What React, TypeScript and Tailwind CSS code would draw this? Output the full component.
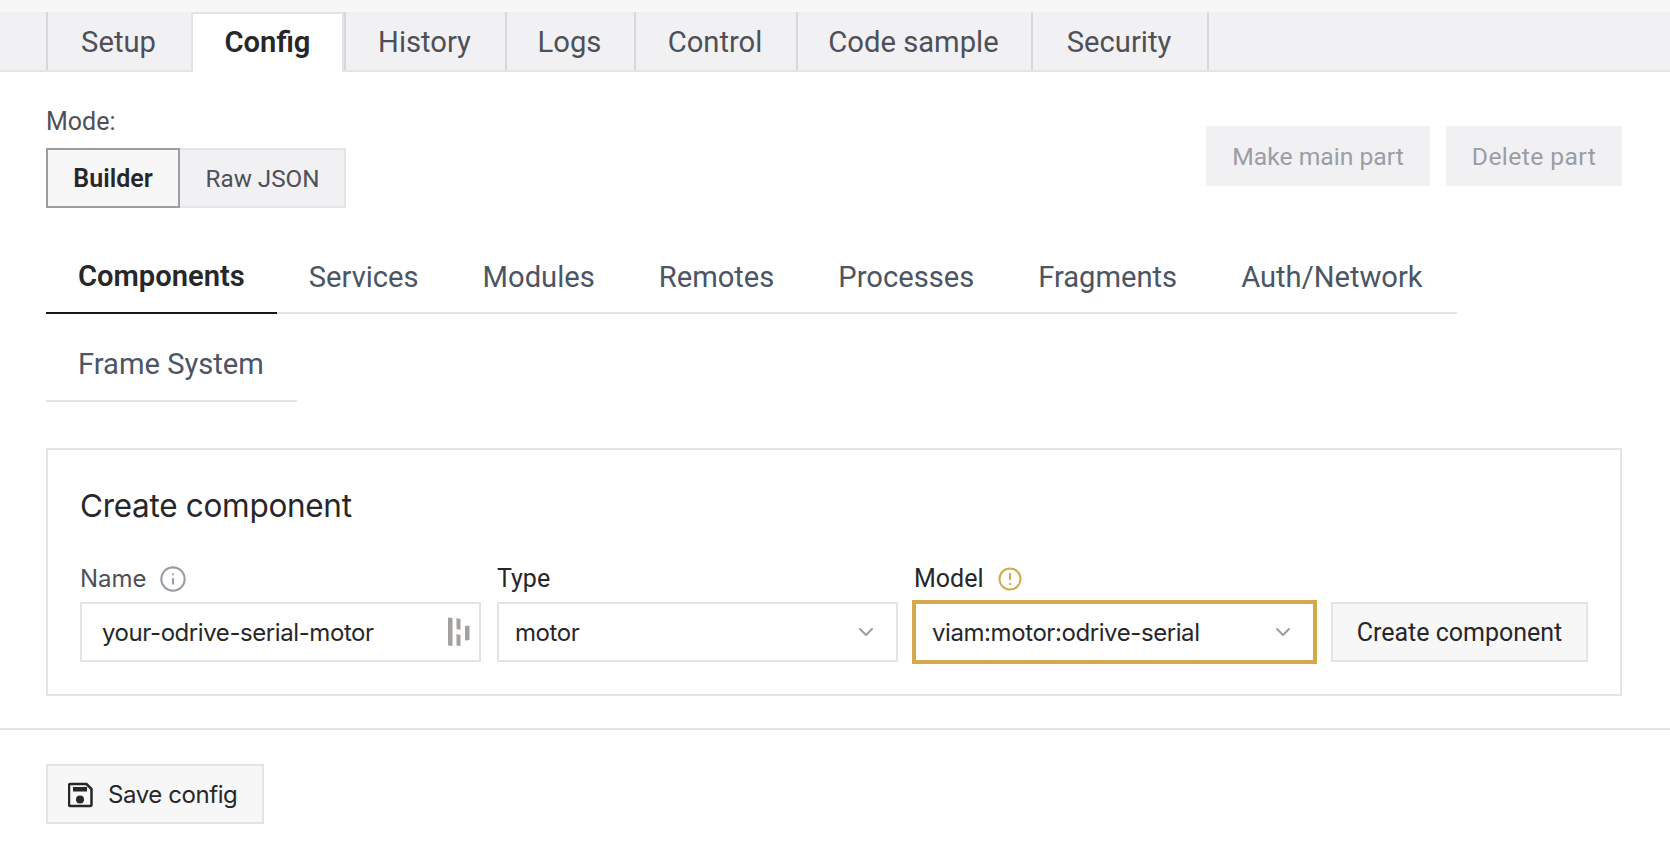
import { ChevronDown, Info } from "lucide-react";

const PLEX = "font-['Roboto','Liberation_Sans',sans-serif]";
const PUBLIC = "font-['Inter',sans-serif] text-[24px] tracking-[-0.42px]";

const topTabs = [
  { label: "Setup", width: "w-[145px]" },
  { label: "Config", width: "w-[153px]", active: true },
  { label: "History", width: "w-[161px]" },
  { label: "Logs", width: "w-[129px]" },
  { label: "Control", width: "w-[162px]" },
  { label: "Code sample", width: "w-[235px]" },
  { label: "Security", width: "w-[178px]", last: true },
];

const subTabs = [
  { label: "Components", active: true },
  { label: "Services" },
  { label: "Modules" },
  { label: "Remotes" },
  { label: "Processes" },
  { label: "Fragments" },
  { label: "Auth/Network" },
];

function SaveIcon() {
  return (
    <svg width="25" height="26" viewBox="0 0 25 26" fill="none" className="shrink-0">
      <path d="M2.5 2h16l5 5v15.500a1.500 1.500 0 0 1-1.500 1.500H2.500a1.500 1.500 0 0 1-1.500-1.500V3.500A1.500 1.500 0 0 1 2.500 2z" stroke="#27272a" strokeWidth="2.500" />
      <rect x="5" y="5" width="14" height="4.500" fill="#27272a" />
      <circle cx="12" cy="17.500" r="4" fill="#27272a" />
    </svg>
  );
}

function DashlaneIcon() {
  return (
    <svg width="22" height="30" viewBox="0 0 22 30" className="shrink-0">
      <path d="M0 0.500l4.500 0.500v28l-4.500-0.500z" fill="#a3a09d" />
      <path d="M8.500 1l4 1v11l-4-1z" fill="#a3a09d" />
      <path d="M8.500 17l4 1v11l-4-0.500z" fill="#a3a09d" />
      <path d="M17 9l4.500-0.500v14.500l-4.500 0.500z" fill="#a3a09d" />
    </svg>
  );
}

function SelectBox({ value, width, warn }: { value: string; width: string; warn?: boolean }) {
  return (
    <div
      className={`flex items-center justify-between bg-white ${width} ${
        warn ? "h-[64px] border-[4px] border-[#d4a94e] pl-[16px] pr-[18px]" : "h-[60px] border-2 border-[#e4e4e7] pl-[16px] pr-[18px]"
      }`}
    >
      <span className={`pt-[2px] text-[#27272a] ${PUBLIC}`}>{value}</span>
      <ChevronDown size={24} color="#9c9ca4" strokeWidth={2} />
    </div>
  );
}

export default function App() {
  return (
    <div className={`h-[854px] w-[1670px] overflow-hidden bg-white ${PLEX}`}>
      <div className="h-[12px] bg-[#f7f7f8]" />
      <div className="flex h-[60px] border-b-2 border-[#e4e4e7] bg-[#f1f1f4] pl-[46px]">
        {topTabs.map((tab) => (
          <div
            key={tab.label}
            className={`flex items-center justify-center text-[29.2px] ${tab.width} ${
              tab.active
                ? "-mb-[2px] h-[60px] border-x-2 border-t-2 border-[#e4e4e7] bg-white font-semibold text-[#27272a]"
                : `border-l-2 border-[#d8d8dc] pt-[4px] pr-[2px] text-[#4f4f57] ${tab.last ? "border-r-2" : ""}`
            }`}
          >
            {tab.label}
          </div>
        ))}
      </div>

      <div className="flex items-start justify-between pl-[46px] pr-[48px]">
        <div className="pt-[37px]">
          <div className="text-[25px] leading-[26px] text-[#4f4f57]">Mode:</div>
          <div className="mt-[13px] flex">
            <div className="flex h-[60px] w-[134px] items-center justify-center border-2 border-[#9c9ca4] bg-[#f7f7f8] pt-[2px] text-[25px] font-semibold text-[#27272a]">
              Builder
            </div>
            <div className="flex h-[60px] w-[166px] items-center justify-center border-2 border-l-0 border-[#e4e4e7] bg-[#f1f1f4] pl-[1px] pt-[2px] text-[24.2px] text-[#4f4f57]">
              Raw JSON
            </div>
          </div>
        </div>
        <div className="flex gap-[16px] pt-[54px] text-[24.7px] text-[#9c9ca4]">
          <div className="flex h-[60px] w-[224px] items-center justify-center bg-[#f1f1f4] pt-[2px]">Make main part</div>
          <div className="flex h-[60px] w-[176px] items-center justify-center bg-[#f1f1f4] pt-[2px] tracking-[0.4px]">Delete part</div>
        </div>
      </div>

      <div className="mx-[46px] mt-[36px] flex w-[1411px] border-b-2 border-[#e4e4e7]">
        {subTabs.map((tab) => (
          <div
            key={tab.label}
            className={`-mb-[2px] flex h-[70px] items-center px-[32px] text-[29.15px] ${
              tab.active ? "border-b-2 border-[#18181b] pb-[2px] font-semibold text-[#27272a]" : "pb-[3px] text-[#4b5563]"
            }`}
          >
            {tab.label}
          </div>
        ))}
      </div>
      <div className="mx-[46px] flex h-[88px] w-[251px] items-center whitespace-nowrap border-b-2 border-[#e4e4e7] px-[32px] pt-[16px] text-[29.15px] text-[#4b5563]">
        Frame System
      </div>

      <div className="mx-[46px] mt-[46px] h-[248px] w-[1576px] border-2 border-[#e4e4e7] px-[32px] pt-[36px]">
        <div className="font-['Inter',sans-serif] text-[31.5px] leading-[40px] tracking-[-0.3px] text-[#27272a]">Create component</div>
        <div className="mt-[39px] flex items-end gap-[16px]">
          <div>
            <div className={`mb-[9px] flex h-[28px] items-center gap-[12px] text-[#4f4f57] ${PUBLIC} tracking-[0px]`}>
              Name <Info size={28} color="#9c9ca4" strokeWidth={1.8} />
            </div>
            <div className="flex h-[60px] w-[401px] items-center justify-between border-2 border-[#e4e4e7] pl-[20px] pr-[9px]">
              <span className={`pt-[2px] text-[#27272a] ${PUBLIC}`}>your-odrive-serial-motor</span>
              <DashlaneIcon />
            </div>
          </div>
          <div>
            <div className="mb-[9px] flex h-[28px] items-center text-[25px] text-[#27272a]">Type</div>
            <SelectBox value="motor" width="w-[401px]" />
          </div>
          <div className="-mx-[2px] -mb-[2px]">
            <div className="mb-[7px] flex h-[28px] items-center gap-[14px] pl-[2px] text-[25px] text-[#27272a]">
              Model
              <svg width="24" height="26" viewBox="0 0 24 26" fill="none">
                <circle cx="12" cy="13" r="10.5" stroke="#d4a94e" strokeWidth="2" />
                <path d="M12 7v7M12 17v2" stroke="#d4a94e" strokeWidth="2" />
              </svg>
            </div>
            <SelectBox value="viam:motor:odrive-serial" width="w-[405px]" warn />
          </div>
          <div className="flex h-[60px] w-[257px] items-center justify-center border-2 border-[#e4e4e7] bg-[#f7f7f8] pt-[2px] text-[25px] text-[#27272a]">
            Create component
          </div>
        </div>
      </div>

      <div className="mt-[32px] h-[2px] bg-[#e4e4e7]" />

      <div className={`mx-[46px] mt-[34px] flex h-[60px] w-[218px] items-center gap-[15px] border-2 border-[#e4e4e7] bg-[#f7f7f8] pl-[20px] pt-[1px] text-[#27272a] ${PUBLIC}`}>
        <SaveIcon />
        Save config
      </div>
    </div>
  );
}
